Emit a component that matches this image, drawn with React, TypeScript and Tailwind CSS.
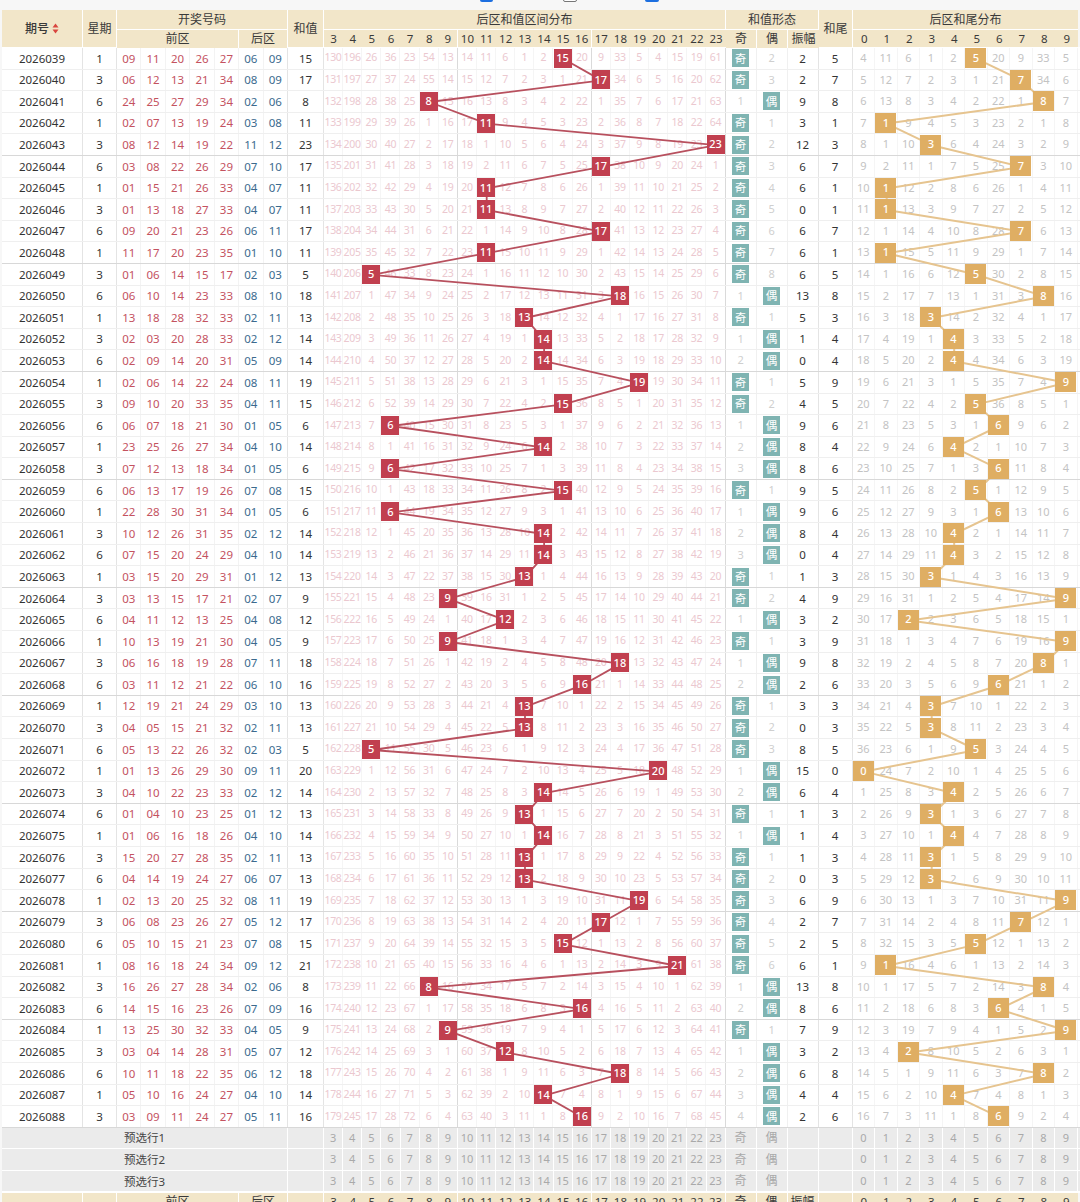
import React from "react";

const RAW = `2026039 1 09 11 20 26 27 06 09
2026040 3 06 12 13 21 34 08 09
2026041 6 24 25 27 29 34 02 06
2026042 1 02 07 13 19 24 03 08
2026043 3 08 12 14 19 22 11 12
2026044 6 03 08 22 26 29 07 10
2026045 1 01 15 21 26 33 04 07
2026046 3 01 13 18 27 33 04 07
2026047 6 09 20 21 23 26 06 11
2026048 1 11 17 20 23 35 01 10
2026049 3 01 06 14 15 17 02 03
2026050 6 06 10 14 23 33 08 10
2026051 1 13 18 28 32 33 02 11
2026052 3 02 03 20 28 33 02 12
2026053 6 02 09 14 20 31 05 09
2026054 1 02 06 14 22 24 08 11
2026055 3 09 10 20 33 35 04 11
2026056 6 06 07 18 21 30 01 05
2026057 1 23 25 26 27 34 04 10
2026058 3 07 12 13 18 34 01 05
2026059 6 06 13 17 19 26 07 08
2026060 1 22 28 30 31 34 01 05
2026061 3 10 12 26 31 35 02 12
2026062 6 07 15 20 24 29 04 10
2026063 1 03 15 20 29 31 01 12
2026064 3 03 13 15 17 21 02 07
2026065 6 04 11 12 13 25 04 08
2026066 1 10 13 19 21 30 04 05
2026067 3 06 16 18 19 28 07 11
2026068 6 03 11 12 21 22 06 10
2026069 1 12 19 21 24 29 03 10
2026070 3 04 05 15 21 32 02 11
2026071 6 05 13 22 26 32 02 03
2026072 1 01 13 26 29 30 09 11
2026073 3 04 10 22 23 33 02 12
2026074 6 01 04 10 23 25 01 12
2026075 1 01 06 16 18 26 04 10
2026076 3 15 20 27 28 35 02 11
2026077 6 04 14 19 24 27 06 07
2026078 1 02 13 20 25 32 08 11
2026079 3 06 08 23 26 27 05 12
2026080 6 05 10 15 21 23 07 08
2026081 1 08 16 18 24 34 09 12
2026082 3 16 26 27 28 34 02 06
2026083 6 14 15 16 23 26 07 09
2026084 1 13 25 30 32 33 04 05
2026085 3 03 04 14 28 31 05 07
2026086 6 10 11 18 22 35 06 12
2026087 1 05 10 16 24 27 04 10
2026088 3 03 09 11 24 27 05 11`;

type Row = {
  id: string;
  wk: string;
  front: string[];
  back: string[];
  sum: number;
  dist: number[];
  tail: number;
  tailDist: number[];
  odd: number;
  even: number;
  amp: number;
};

const SUMS = Array.from({ length: 21 }, (_, i) => i + 3);
const TAILS = Array.from({ length: 10 }, (_, i) => i);

function build(): Row[] {
  const lines = RAW.trim().split("\n");
  const dc: number[] = [130, 196, 26, 36, 23, 54, 13, 14, 11, 6, 1, 2, 0, 20, 9, 33, 5, 4, 15, 19, 61];
  const tc: number[] = [4, 11, 6, 1, 2, 0, 20, 9, 33, 5];
  let odd = 0;
  let even = 2;
  let prev = 0;
  const out: Row[] = [];
  lines.forEach((ln, i) => {
    const p = ln.trim().split(/\s+/);
    const front = p.slice(2, 7);
    const back = p.slice(7, 9);
    const sum = parseInt(back[0], 10) + parseInt(back[1], 10);
    const tail = sum % 10;
    if (i > 0) {
      for (let k = 0; k < 21; k++) dc[k] = SUMS[k] === sum ? 0 : dc[k] + 1;
      for (let k = 0; k < 10; k++) tc[k] = k === tail ? 0 : tc[k] + 1;
      if (sum % 2 === 1) {
        odd = 0;
        even += 1;
      } else {
        even = 0;
        odd += 1;
      }
    }
    const amp = i === 0 ? 2 : Math.abs(sum - prev);
    prev = sum;
    out.push({
      id: p[0],
      wk: p[1],
      front,
      back,
      sum,
      dist: [...dc],
      tail,
      tailDist: [...tc],
      odd,
      even,
      amp,
    });
  });
  return out;
}

const ROWS = build();

const ROW_H = 21.6;
const DIST_X0 = 81 + 34 + 24.43 * 7 + 36;
const W_D = 19.14;
const TAIL_X0 = DIST_X0 + W_D * 21 + 31 * 3 + 34;
const W_T = 22.5;

function SortIcon() {
  return (
    <svg width="7" height="11" viewBox="0 0 7 11" className="ml-[3px]">
      <path d="M3.5 0.5 L6.5 4.5 L0.5 4.5 Z" fill="#d9463f" />
      <path d="M3.5 10.5 L6.5 6.5 L0.5 6.5 Z" fill="#d9463f" />
    </svg>
  );
}

const hd = "bg-[#f2e6c9] text-[#3a3a3a] flex items-center justify-center shrink-0";

function Header() {
  return (
    <div className="flex h-[38px] border-b border-white">
      <div className={`${hd} w-[81px] border-r border-white text-[12px] font-medium`}>
        期号
        <SortIcon />
      </div>
      <div className={`${hd} w-[34px] border-r border-white text-[12px]`}>星期</div>
      <div className="flex w-[171.01px] shrink-0 flex-col border-r border-white">
        <div className={`${hd} h-[20px] border-b border-white text-[12px]`}>开奖号码</div>
        <div className="flex flex-1">
          <div className={`${hd} w-[122.15px] border-r border-white text-[12px]`}>前区</div>
          <div className={`${hd} flex-1 text-[12px]`}>后区</div>
        </div>
      </div>
      <div className={`${hd} w-[36px] border-r border-white text-[12px]`}>和值</div>
      <div className="flex w-[401.94px] shrink-0 flex-col border-r border-white">
        <div className={`${hd} h-[20px] border-b border-white text-[12px]`}>后区和值区间分布</div>
        <div className="flex flex-1">
          {SUMS.map((v, k) => (
            <div
              key={v}
              className={`${hd} w-[19.14px] text-[11.5px] ${k === 6 || k === 13 ? "border-r border-white" : ""}`}
            >
              {v}
            </div>
          ))}
        </div>
      </div>
      <div className="flex w-[93px] shrink-0 flex-col border-r border-white">
        <div className={`${hd} h-[20px] border-b border-white text-[12px]`}>和值形态</div>
        <div className="flex flex-1">
          <div className={`${hd} w-[31px] border-r border-white text-[12px]`}>奇</div>
          <div className={`${hd} w-[31px] border-r border-white text-[12px]`}>偶</div>
          <div className={`${hd} w-[31px] text-[12px]`}>振幅</div>
        </div>
      </div>
      <div className={`${hd} w-[34px] border-r border-white text-[12px]`}>和尾</div>
      <div className="flex w-[225px] shrink-0 flex-col">
        <div className={`${hd} h-[20px] border-b border-white text-[12px]`}>后区和尾分布</div>
        <div className="flex flex-1">
          {TAILS.map((v) => (
            <div key={v} className={`${hd} w-[22.5px] text-[11.5px]`}>
              {v}
            </div>
          ))}
        </div>
      </div>
    </div>
  );
}

const cell = "flex shrink-0 items-center justify-center";

function DataRow({ r, i }: { r: Row; i: number }) {
  const sep = i % 5 === 4 ? "border-[#d8d8d8]" : "border-[#efefef]";
  return (
    <div className={`flex h-[21.6px] border-b bg-white ${sep}`}>
      <div className={`${cell} w-[81px] border-r border-[#e4e4e4] text-[11.5px] text-[#333]`}>{r.id}</div>
      <div className={`${cell} w-[34px] border-r border-[#e4e4e4] text-[11.5px] text-[#333]`}>{r.wk}</div>
      {r.front.map((n, k) => (
        <div key={"f" + k} className={`${cell} w-[24.43px] border-r border-[#f3f3f3] text-[11.5px] text-[#c4525f]`}>
          {n}
        </div>
      ))}
      {r.back.map((n, k) => (
        <div
          key={"b" + k}
          className={`${cell} w-[24.43px] border-r text-[11.5px] text-[#3b6a8e] ${k === 1 ? "border-[#e4e4e4]" : "border-[#f3f3f3]"}`}
        >
          {n}
        </div>
      ))}
      <div className={`${cell} w-[36px] border-r border-[#e4e4e4] text-[11.5px] text-[#333]`}>{r.sum}</div>
      {SUMS.map((v, k) => (
        <div
          key={"d" + v}
          className={`${cell} w-[19.14px] border-r text-[10.5px] tracking-[-0.3px] text-[#ebc8cf] ${
            k === 6 || k === 13 || k === 20 ? "border-[#dadada]" : "border-[#f5f5f5]"
          }`}
        >
          {v === r.sum ? (
            <span className="relative z-10 flex h-[19px] w-[18px] items-center justify-center bg-[#c13f4f] text-[11px] font-medium tracking-normal text-white">
              {v}
            </span>
          ) : (
            r.dist[k]
          )}
        </div>
      ))}
      <div className={`${cell} w-[31px] border-r border-[#f0f0f0] text-[11px] text-[#cfcfcf]`}>
        {r.sum % 2 === 1 ? (
          <span className="flex h-[18px] w-[17px] items-center justify-center bg-[#7fb4b2] text-[11.5px] text-white">奇</span>
        ) : (
          r.odd
        )}
      </div>
      <div className={`${cell} w-[31px] border-r border-[#f0f0f0] text-[11px] text-[#cfcfcf]`}>
        {r.sum % 2 === 0 ? (
          <span className="flex h-[18px] w-[17px] items-center justify-center bg-[#7fb4b2] text-[11.5px] text-white">偶</span>
        ) : (
          r.even
        )}
      </div>
      <div className={`${cell} w-[31px] border-r border-[#e4e4e4] text-[11.5px] text-[#333]`}>{r.amp}</div>
      <div className={`${cell} w-[34px] border-r border-[#e4e4e4] text-[11.5px] text-[#333]`}>{r.tail}</div>
      {TAILS.map((v, k) => (
        <div key={"t" + v} className={`${cell} w-[22.5px] border-r border-[#f5f5f5] text-[11px] text-[#c3c3c3]`}>
          {v === r.tail ? (
            <span className="relative z-10 flex h-[20px] w-[21px] items-center justify-center bg-[#dfae63] text-[11px] font-medium text-white">
              {v}
            </span>
          ) : (
            r.tailDist[k]
          )}
        </div>
      ))}
    </div>
  );
}

function PreRow({ n }: { n: number }) {
  const g = "flex shrink-0 items-center justify-center border-r border-white text-[11px] text-[#a9a9a9]";
  const lbl = "flex shrink-0 items-center justify-center border-r border-white text-[11.5px] text-[#444]";
  return (
    <div className="flex h-[21.6px] border-b border-white bg-[#ebebeb]">
      <div className={`${lbl} w-[286.01px]`}>预选行{n}</div>
      <div className={`${g} w-[36px]`} />
      {SUMS.map((v) => (
        <div key={v} className={`${g} w-[19.14px]`}>
          {v}
        </div>
      ))}
      <div className={`${g} w-[31px] text-[12px]`}>奇</div>
      <div className={`${g} w-[31px] text-[12px]`}>偶</div>
      <div className={`${g} w-[31px]`} />
      <div className={`${g} w-[34px]`} />
      {TAILS.map((v) => (
        <div key={v} className={`${g} w-[22.5px]`}>
          {v}
        </div>
      ))}
    </div>
  );
}

function Footer() {
  return (
    <div className="flex h-[18px] border-t border-white">
      <div className={`${hd} w-[81px] border-r border-white`} />
      <div className={`${hd} w-[34px] border-r border-white`} />
      <div className={`${hd} w-[122.15px] border-r border-white text-[12px]`}>前区</div>
      <div className={`${hd} w-[48.86px] border-r border-white text-[12px]`}>后区</div>
      <div className={`${hd} w-[36px] border-r border-white`} />
      {SUMS.map((v, k) => (
        <div key={v} className={`${hd} w-[19.14px] text-[11.5px] ${k === 6 || k === 13 || k === 20 ? "border-r border-white" : ""}`}>
          {v}
        </div>
      ))}
      <div className={`${hd} w-[31px] border-r border-white text-[12px]`}>奇</div>
      <div className={`${hd} w-[31px] border-r border-white text-[12px]`}>偶</div>
      <div className={`${hd} w-[31px] border-r border-white text-[12px]`}>振幅</div>
      <div className={`${hd} w-[34px] border-r border-white`} />
      {TAILS.map((v) => (
        <div key={v} className={`${hd} w-[22.5px] text-[11.5px]`}>
          {v}
        </div>
      ))}
    </div>
  );
}

function Lines() {
  const sumPts = ROWS.map((r, i) => [DIST_X0 + (r.sum - 3 + 0.5) * W_D, (i + 0.5) * ROW_H]);
  const tailPts = ROWS.map((r, i) => [TAIL_X0 + (r.tail + 0.5) * W_T, (i + 0.5) * ROW_H]);
  return (
    <svg className="pointer-events-none absolute left-0 top-0" width="1076" height="1080" viewBox="0 0 1076 1080">
      <polyline
        points={sumPts.map((p) => p.join(",")).join(" ")}
        fill="none"
        stroke="#b8505e"
        strokeWidth="1.8"
        strokeLinejoin="round"
      />
      <polyline
        points={tailPts.map((p) => p.join(",")).join(" ")}
        fill="none"
        stroke="#e6c48f"
        strokeWidth="2"
        strokeLinejoin="round"
      />
    </svg>
  );
}

export default function App() {
  return (
    <div className="h-[1202px] w-[1080px] overflow-hidden bg-[#f7f7f7] font-['Noto_Sans','Noto_Sans_CJK_SC',sans-serif]">
      <div className="h-[10px] overflow-hidden">
        <div className="-mt-[11px] flex items-start">
          <div className="ml-[480px] h-[13px] w-[13px] rounded-[2px] bg-[#1d6fe0]" />
          <div className="ml-[70px] h-[13px] w-[14px] rounded-[2px] border border-[#777] bg-white" />
          <div className="ml-[68px] h-[13px] w-[14px] rounded-[2px] bg-[#1d6fe0]" />
        </div>
      </div>
      <div className="pl-[2px]">
        <Header />
        <div className="relative">
          <Lines />
          {ROWS.map((r, i) => (
            <DataRow key={r.id} r={r} i={i} />
          ))}
        </div>
        <PreRow n={1} />
        <PreRow n={2} />
        <PreRow n={3} />
        <Footer />
      </div>
    </div>
  );
}
